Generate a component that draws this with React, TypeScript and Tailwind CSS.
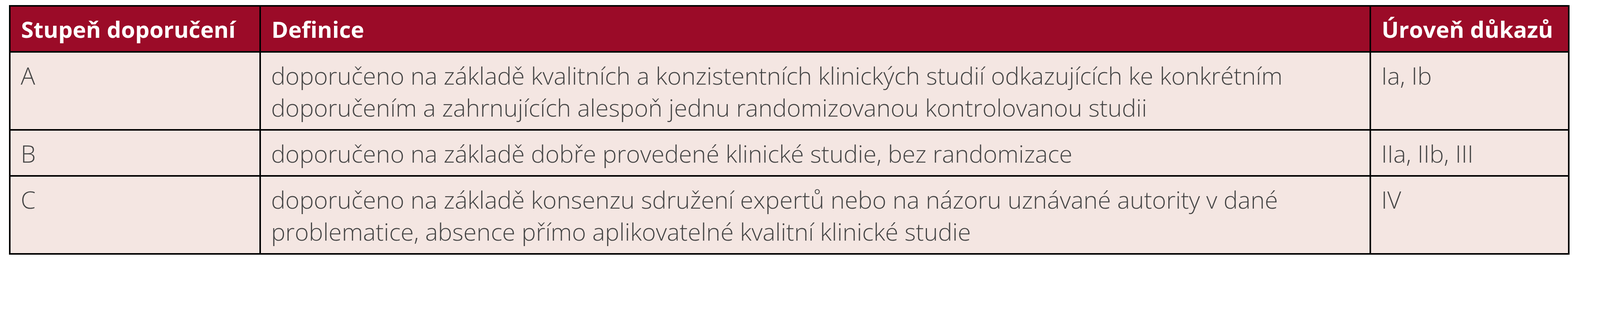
const rows = [
  {
    grade: 'A',
    definition:
      'doporučeno na základě kvalitních a konzistentních klinických studií odkazujících ke konkrétním doporučením a zahrnujících alespoň jednu randomizovanou kontrolovanou studii',
    level: 'Ia, Ib',
  },
  {
    grade: 'B',
    definition: 'doporučeno na základě dobře provedené klinické studie, bez randomizace',
    level: 'IIa, IIb, III',
  },
  {
    grade: 'C',
    definition:
      'doporučeno na základě konsenzu sdružení expertů nebo na názoru uznávané autority v dané problematice, absence přímo aplikovatelné kvalitní klinické studie',
    level: 'IV',
  },
]

const head = "bg-[#9b0b28] pl-[27px] pr-[16px] pt-[17px] pb-[15px] text-[58px] leading-[82px] font-bold text-white font-['Open_Sans',sans-serif]"
const cell = "bg-[#f4e6e2] pl-[26px] pr-[16px] pt-[17px] pb-[15px] text-[61.5px] leading-[82px] font-light text-[#454545] font-['Open_Sans',sans-serif]"

export default function App() {
  return (
    <div className="bg-white pt-[13px] pl-[23px]">
      <div className="grid w-[3995px] grid-cols-[637px_2838px_1fr] gap-[4px] bg-black p-[4px]">
        <div className={head}>Stupeň doporučení</div>
        <div className={head}>Definice</div>
        <div className={head}>Úroveň důkazů</div>
        {rows.map(row => (
          <div key={row.grade} className="contents">
            <div className={cell}>{row.grade}</div>
            <div className={cell}>{row.definition}</div>
            <div className={cell}>{row.level}</div>
          </div>
        ))}
      </div>
    </div>
  )
}
